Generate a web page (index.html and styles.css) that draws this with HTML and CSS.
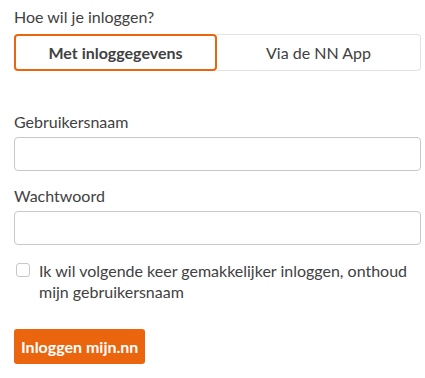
FILE: index.html
```html
<!DOCTYPE html>
<html lang="nl">
<head>
  <meta charset="UTF-8">
  <meta name="viewport" content="width=device-width, initial-scale=1.0">
  <title>Inloggen</title>
  <link rel="stylesheet" href="styles.css">
</head>
<body>
  <form class="login">
    <div class="question">Hoe wil je inloggen?</div>

    <!-- Login method switch -->
    <div class="tabs">
      <button type="button" class="tab active">Met inloggegevens</button>
      <button type="button" class="tab">Via de NN App</button>
    </div>

    <div class="field first-field">
      <label for="username">Gebruikersnaam</label>
      <input id="username" type="text">
    </div>

    <div class="field">
      <label for="password">Wachtwoord</label>
      <input id="password" type="password">
    </div>

    <label class="remember">
      <input type="checkbox">
      <span class="box"></span>
      <span>Ik wil volgende keer gemakkelijker inloggen, onthoud mijn gebruikersnaam</span>
    </label>

    <button type="submit" class="submit">Inloggen mijn.nn</button>
  </form>
</body>
</html>
```

FILE: styles.css
```css
html, body {
  margin: 0;
  padding: 0;
}

* {
  box-sizing: border-box;
}

body {
  font-family: Lato, "Open Sans", sans-serif;
  font-size: 16px;
  color: #414141;
  background-color: #fff;
}

.login {
  padding: 7px 4px 0 14px;
  display: flex;
  flex-direction: column;
}

.question {
  line-height: 20px;
}

.tabs {
  margin-top: 7px;
  display: grid;
  grid-template-columns: 203px 1fr;
  height: 37px;
}
.tab {
  font-family: inherit;
  font-size: 16px;
  color: #414141;
  background-color: #fff;
  border: 1px solid #e6e2de;
  cursor: pointer;
  padding: 0;
}
.tab:first-child {
  border-radius: 4px 0 0 4px;
}
.tab:last-child {
  border-left: none;
  border-radius: 0 4px 4px 0;
}
.tab.active {
  border: 2px solid #ea650d;
  border-radius: 4px;
  font-weight: 700;
}

.field {
  display: flex;
  flex-direction: column;
  margin-top: 15px;
}
.first-field {
  margin-top: 41px;
}
.field label {
  line-height: 20px;
  margin-bottom: 5px;
}
.field input {
  height: 34px;
  border: 1px solid #c8c8c8;
  border-radius: 4px;
  font-family: inherit;
  font-size: 16px;
  padding: 0 10px;
  outline: none;
}

.remember {
  margin-top: 15px;
  display: flex;
  gap: 9px;
  line-height: 21px;
  padding-left: 2px;
  cursor: pointer;
}
.remember input {
  display: none;
}
.remember .box {
  flex: 0 0 14px;
  width: 14px;
  height: 14px;
  margin-top: 3px;
  border: 1px solid #c8c8c8;
  border-radius: 3px;
  background-color: #fff;
}

.submit {
  align-self: flex-start;
  margin-top: 27px;
  height: 35px;
  padding: 0 7px;
  border: none;
  border-radius: 3px;
  background-color: #ea650d;
  color: #fff;
  font-family: inherit;
  font-size: 16px;
  font-weight: 700;
  cursor: pointer;
}
```
